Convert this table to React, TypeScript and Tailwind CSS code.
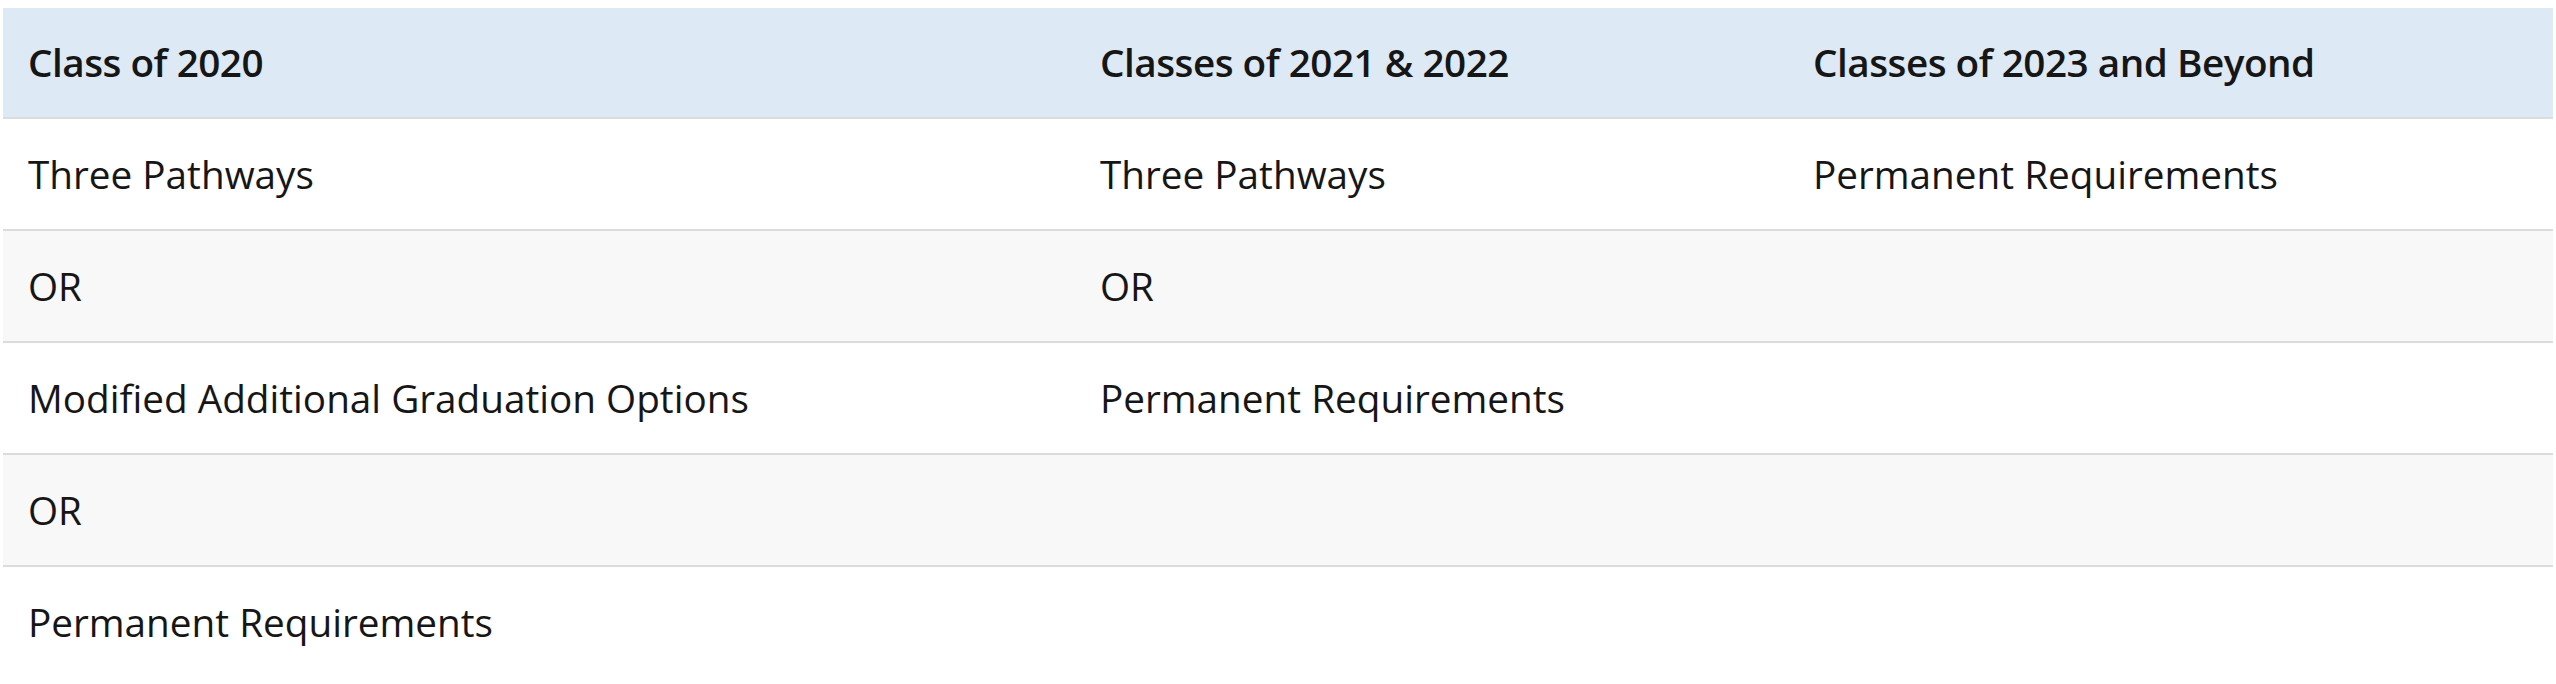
const headers = ['Class of 2020', 'Classes of 2021 & 2022', 'Classes of 2023 and Beyond'];

const rows: string[][] = [
    ['Three Pathways', 'Three Pathways', 'Permanent Requirements'],
    ['OR', 'OR', ''],
    ['Modified Additional Graduation Options', 'Permanent Requirements', ''],
    ['OR', '', ''],
    ['Permanent Requirements', '', ''],
];

const App = () => {
    return (
        <div className="w-[2556px] h-[684px] overflow-hidden bg-white pt-[8px] px-[3px] font-['Open_Sans',sans-serif] text-[38.7px] text-[#161616]">
            <div className="grid grid-cols-[1072px_713px_1fr] bg-[#dde9f5] border-b-[2px] border-[#dcdcdc]">
                {headers.map((h) => (
                    <div key={h} className="h-[109px] flex items-center pl-[25px] font-semibold tracking-[-0.5px]">
                        {h}
                    </div>
                ))}
            </div>
            {rows.map((row, i) => (
                <div
                    key={i}
                    className={`grid grid-cols-[1072px_713px_1fr] ${i < rows.length - 1 ? 'border-b-[2px] border-[#dcdcdc]' : ''} ${
                        i % 2 === 1 ? 'bg-[#f8f8f8]' : 'bg-white'
                    }`}
                >
                    {row.map((cell, j) => (
                        <div key={j} className="h-[110px] flex items-center pl-[25px]">
                            {cell}
                        </div>
                    ))}
                </div>
            ))}
        </div>
    );
};

export default App;
